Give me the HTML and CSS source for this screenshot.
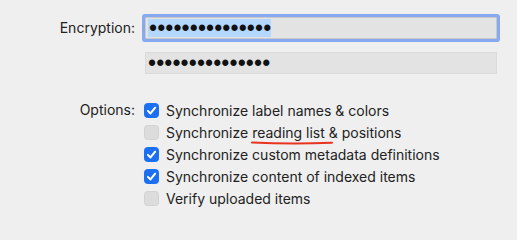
FILE: index.html
```html
<!DOCTYPE html>
<html>
<head>
<meta charset="utf-8">
<link rel="stylesheet" href="styles.css">
</head>
<body>
<div class="form">
  <div class="label enc-label">Encryption:</div>
  <div class="fields">
    <div class="field focused"><span class="sel"><span class="dots">•••••••••••••••</span></span></div>
    <div class="field"><span class="dots">•••••••••••••••</span></div>
  </div>
  <div class="label opt-label">Options:</div>
  <ul class="options">
    <li class="opt"><span class="cb on"><svg viewBox="0 0 16 16"><path d="M4.2 8.4 L6.9 11.1 L11.9 5" /></svg></span><span class="txt">Synchronize label names &amp; colors</span></li>
    <li class="opt"><span class="cb"></span><span class="txt">Synchronize <span class="marked">reading list<svg class="squiggle" viewBox="0 0 82 4" preserveAspectRatio="none"><path d="M1 1.6 Q40 3.2 81 1.8" /></svg></span> &amp; positions</span></li>
    <li class="opt"><span class="cb on"><svg viewBox="0 0 16 16"><path d="M4.2 8.4 L6.9 11.1 L11.9 5" /></svg></span><span class="txt">Synchronize custom metadata definitions</span></li>
    <li class="opt"><span class="cb on"><svg viewBox="0 0 16 16"><path d="M4.2 8.4 L6.9 11.1 L11.9 5" /></svg></span><span class="txt">Synchronize content of indexed items</span></li>
    <li class="opt"><span class="cb"></span><span class="txt">Verify uploaded items</span></li>
  </ul>
</div>
</body>
</html>
```
FILE: styles.css
```css
html, body {
  margin: 0;
  padding: 0;
  background: #efefef;
}
body {
  font-family: Inter, "Noto Sans", "Liberation Sans", sans-serif;
  font-size: 14px;
  color: #222;
  width: 517px;
  height: 225px;
  overflow: hidden;
}
.form {
  display: grid;
  grid-template-columns: 135px 362px;
  column-gap: 10px;
  padding-top: 17px;
}
.label {
  text-align: right;
  line-height: 22px;
}
.fields {
  display: flex;
  flex-direction: column;
  gap: 13px;
}
.field {
  height: 22px;
  background: #e3e3e3;
  border: 1px solid #dadada;
  box-sizing: border-box;
  width: 352px;
  display: flex;
  align-items: center;
  padding-left: 2px;
}
.field.focused {
  border-color: #c9c9c9;
  box-shadow: 0 0 0 3px #86a9f0;
  border-radius: 1px;
}
.sel {
  background: #b3d7ff;
  height: 18px;
  display: flex;
  align-items: center;
  padding-left: 1px;
  padding-right: 0;
}
.dots {
  font-family: "Liberation Sans", sans-serif;
  font-size: 23px;
  letter-spacing: 0.1px;
  color: #111;
  line-height: 18px;
}
.opt-label {
  margin-top: 25px;
}
.options {
  list-style: none;
  margin: 25px 0 0 -1px;
  padding: 0;
}
.opt {
  display: flex;
  align-items: center;
  height: 22px;
  gap: 7px;
  white-space: nowrap;
}
.cb {
  width: 15px;
  height: 15px;
  box-sizing: border-box;
  border-radius: 3.5px;
  background: #dcdcdc;
  border: 1px solid #d2d2d2;
  flex: none;
  display: flex;
}
.cb.on {
  background: #1b6ff2;
  border-color: #1b6ff2;
}
.cb svg {
  width: 15px;
  height: 15px;
  margin: -1px;
}
.cb svg path {
  fill: none;
  stroke: #fff;
  stroke-width: 2.2;
  stroke-linecap: round;
  stroke-linejoin: round;
}
.marked {
  position: relative;
}
.squiggle {
  position: absolute;
  left: -1px;
  top: 17px;
  width: 82px;
  height: 4px;
}
.squiggle path {
  fill: none;
  stroke: #e8341f;
  stroke-width: 2;
  stroke-linecap: round;
}
```
